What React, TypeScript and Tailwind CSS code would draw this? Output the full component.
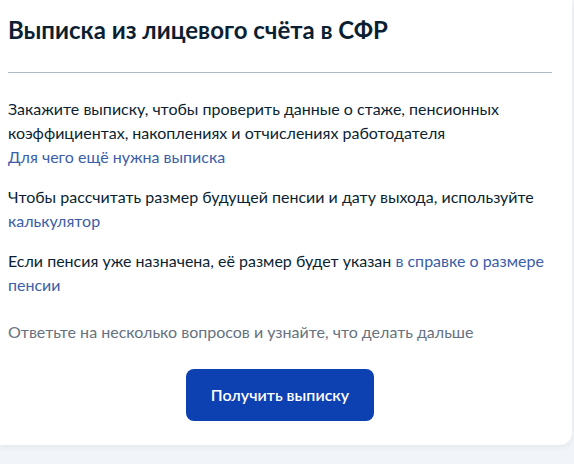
export default function App() {
  return (
    <div className="min-h-[464px] w-[574px] bg-[#f1f4f8] font-['Lato','Noto_Sans',sans-serif] text-[#0b1f33]">
      <div className="w-[572px] rounded-br-xl bg-white pb-[24px] pl-2 pt-[14px] shadow-[0_2px_6px_rgba(11,31,51,0.06)]">
        <h2 className="text-[24px] font-bold leading-[32px]">Выписка из лицевого счёта в СФР</h2>
        <div className="mt-[26px] h-px w-[544px] bg-[#b0bac5]" />
        <div className="mt-[24px] w-[560px] text-[16px] leading-[24px]">
          <p>
            Закажите выписку, чтобы проверить данные о стаже, пенсионных коэффициентах, накоплениях и отчислениях
            работодателя
          </p>
          <a className="block text-[#3b5ea8]">Для чего ещё нужна выписка</a>
          <p className="mt-4">
            Чтобы рассчитать размер будущей пенсии и дату выхода, используйте{" "}
            <a className="text-[#3b5ea8]">калькулятор</a>
          </p>
          <p className="mt-4">
            Если пенсия уже назначена, её размер будет указан{" "}
            <a className="text-[#3b5ea8]">в справке о размере пенсии</a>
          </p>
          <p className="mt-[23px] text-[#66727f]">Ответьте на несколько вопросов и узнайте, что делать дальше</p>
        </div>
        <div className="mt-[25px] flex w-[544px] justify-center">
          <button className="h-[52px] rounded-lg bg-[#0d41b2] px-[25px] text-[16px] font-semibold text-white">
            Получить выписку
          </button>
        </div>
      </div>
    </div>
  );
}
